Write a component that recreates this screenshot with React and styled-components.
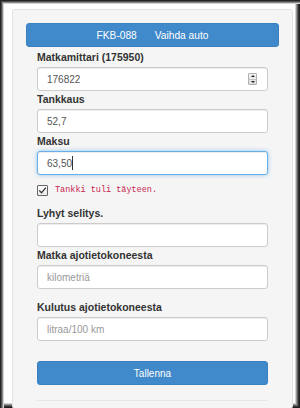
import React, { useEffect, useRef } from 'react';
import styled, { createGlobalStyle } from 'styled-components';

const GlobalStyle = createGlobalStyle`
  html, body {
    margin: 0;
    padding: 0;
    background: #fff;
  }
  * {
    box-sizing: border-box;
  }
`

// window frame around the whole form
const Frame = styled.div`
  width: 300px;
  height: 408px;
  overflow: hidden;
  padding: 9px 7px 0 12px;
  background: #fff;
  box-shadow:
    inset 1px 1px 0 #262626,
    inset 2px 2px 0 #4e4e4e,
    inset 3px 3px 0 #8a8a8a,
    inset 4px 4px 0 #d4d4d4,
    inset -1px -1px 0 #1e1e1e,
    inset -2px -2px 0 #363636,
    inset -3px -3px 0 #5e5e5e,
    inset -4px -4px 0 #979797,
    inset -5px -5px 0 #d0d0d0;
`

const Well = styled.div`
  min-height: 400px;
  padding: 13px 13px 0;
  background: #f5f5f5;
  border: 1px solid #e3e3e3;
  border-radius: 3px;
`

const CarBar = styled.div`
  height: 24px;
  display: flex;
  align-items: center;
  justify-content: center;
  gap: 18px;
  background: #4089ca;
  border: 1px solid #3b82c2;
  border-radius: 3px;
  color: #fff;
  font: 10.2px 'Liberation Sans', Arial, sans-serif;
`

const CarLink = styled.span`
  color: #fff;
`

const Form = styled.form`
  padding: 2px 11px 0;
`

const Label = styled.label`
  display: block;
  margin: ${p => (p.$spaced ? '10px' : '0')} 0 2px;
  font: bold 10.5px/16px 'Liberation Sans', Arial, sans-serif;
  color: #333;
`

const InputWrap = styled.div`
  position: relative;
`

const Input = styled.input`
  display: block;
  width: 100%;
  height: 24px;
  padding: 0 9px;
  border: 1px solid ${p => (p.$focused ? '#66afe9' : '#ccc')};
  border-radius: 3px;
  background: #fff;
  color: #555;
  font: 10px 'Liberation Sans', Arial, sans-serif;
  box-shadow: ${p => (p.$focused
    ? 'inset 0 1px 1px rgba(0,0,0,.075), 0 0 4px rgba(102,175,233,.7)'
    : 'inset 0 1px 1px rgba(0,0,0,.075)')};
  outline: none;
  caret-color: #333;

  &::placeholder {
    color: #999;
  }
`

// text cursor shown after the typed amount
const Caret = styled.span`
  position: absolute;
  top: 5px;
  left: 35px;
  width: 1px;
  height: 14px;
  background: #333;
  pointer-events: none;
`

// little up/down arrows of the number field
const Spinner = styled.span`
  position: absolute;
  top: 6px;
  right: 11px;
  width: 9px;
  height: 12px;
  display: flex;
  flex-direction: column;
  background: linear-gradient(#f4f4f4, #dcdcdc);
  border: 1px solid #b0b0b0;
  border-radius: 1px;
`

const SpinHalf = styled.span`
  flex: 1;
  display: flex;
  align-items: center;
  justify-content: center;
  border-top: ${p => (p.$down ? '1px solid #c4c4c4' : '0')};
`

const Arrow = styled.span`
  width: 0;
  height: 0;
  border-left: 2px solid transparent;
  border-right: 2px solid transparent;
  ${p => (p.$down ? 'border-top: 2px solid #222;' : 'border-bottom: 2px solid #222;')}
`

const CheckRow = styled.div`
  display: flex;
  align-items: center;
  gap: 7px;
  height: 11px;
  margin: 10px 0 9px;
`

const CheckBox = styled.span`
  flex: none;
  display: flex;
  align-items: center;
  justify-content: center;
  width: 11px;
  height: 11px;
  border: 1px solid #666;
  background: linear-gradient(#fdfdfd, #ebebeb);
  border-radius: 1px;

  svg {
    display: block;
  }
`

const CheckText = styled.span`
  font: 8.5px/11px 'Liberation Mono', 'Courier New', monospace;
  color: #c7254e;
`

const SaveButton = styled.button`
  display: block;
  width: 100%;
  height: 24px;
  margin-top: 20px;
  border: 1px solid #3a80c0;
  border-radius: 3px;
  background: #4089ca;
  color: #fff;
  font: 10px 'Liberation Sans', Arial, sans-serif;
  cursor: pointer;
`

const Divider = styled.hr`
  margin: 15px 0 0;
  border: 0;
  border-top: 1px solid #e6e6e6;
`

export default function App() {
  const paid = useRef(null);

  useEffect(() => {
    const el = paid.current;
    if (el) {
      el.focus();
      el.setSelectionRange(el.value.length, el.value.length);
    }
  }, []);

  return (
    <>
      <GlobalStyle />
      <Frame>
        <Well>
          <CarBar>
            <CarLink>FKB-088</CarLink>
            <CarLink>Vaihda auto</CarLink>
          </CarBar>

          <Form onSubmit={e => e.preventDefault()}>
            <Label>Matkamittari (175950)</Label>
            <InputWrap>
              <Input type='text' defaultValue='176822' />
              <Spinner>
                <SpinHalf><Arrow /></SpinHalf>
                <SpinHalf $down><Arrow $down /></SpinHalf>
              </Spinner>
            </InputWrap>

            <Label>Tankkaus</Label>
            <Input type='text' defaultValue='52,7' />

            <Label>Maksu</Label>
            <InputWrap>
              <Input type='text' defaultValue='63,50' ref={paid} $focused />
              <Caret />
            </InputWrap>

            <CheckRow>
              <CheckBox>
                <svg width='9' height='9' viewBox='0 0 9 9'>
                  <path d='M1.2 4.4 L3.5 6.8 L7.8 1.6' fill='none' stroke='#333' strokeWidth='1.3' />
                </svg>
              </CheckBox>
              <CheckText>Tankki tuli täyteen.</CheckText>
            </CheckRow>

            <Label>Lyhyt selitys.</Label>
            <Input type='text' />

            <Label>Matka ajotietokoneesta</Label>
            <Input type='text' placeholder='kilometriä' />

            <Label $spaced>Kulutus ajotietokoneesta</Label>
            <Input type='text' placeholder='litraa/100 km' />

            <SaveButton type='submit'>Tallenna</SaveButton>
            <Divider />
          </Form>
        </Well>
      </Frame>
    </>
  );
}
